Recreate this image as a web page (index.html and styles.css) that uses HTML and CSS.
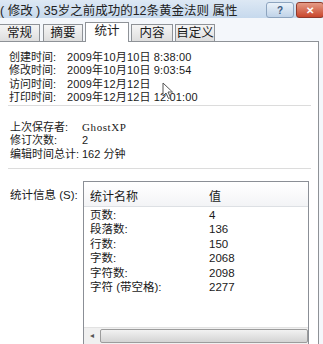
FILE: index.html
```html
<!DOCTYPE html>
<html lang="zh-CN">
<head>
  <meta charset="UTF-8" />
  <title>属性</title>
  <link rel="stylesheet" href="styles.css">
</head>
<body>
  <div class="window">
    <div class="titlebar">
      <span class="title">( 修改 ) 35岁之前成功的12条黄金法则 属性</span>
      <span class="tbtn help">?</span>
      <span class="tbtn close">✕</span>
    </div>

    <div class="tabs">
      <span class="tab t1">常规</span>
      <span class="tab t2">摘要</span>
      <span class="tab t3 active">统计</span>
      <span class="tab t4">内容</span>
      <span class="tab t5">自定义</span>
    </div>

    <div class="panel">
      <div class="group dates">
        <div class="row"><span class="lbl">创建时间:</span><span class="val">2009年10月10日 8:38:00</span></div>
        <div class="row"><span class="lbl">修改时间:</span><span class="val">2009年10月10日 9:03:54</span></div>
        <div class="row"><span class="lbl">访问时间:</span><span class="val">2009年12月12日</span></div>
        <div class="row"><span class="lbl">打印时间:</span><span class="val">2009年12月12日 12:01:00</span></div>
      </div>
      <div class="sep"></div>
      <div class="group meta">
        <div class="row"><span class="lbl">上次保存者:</span><span class="serif">GhostXP</span></div>
        <div class="row"><span class="lbl">修订次数:</span><span>2</span></div>
        <div class="row"><span class="lbl">编辑时间总计:</span><span>162 分钟</span></div>
      </div>
      <div class="sep"></div>

      <div class="stats">
        <span class="stats-lbl">统计信息 (S):</span>
        <div class="listbox">
          <div class="lb-head">
            <span class="c1">统计名称</span>
            <span class="c2">值</span>
          </div>
          <div class="lb-body">
            <div class="lb-row"><span class="c1">页数:</span><span class="c2">4</span></div>
            <div class="lb-row"><span class="c1">段落数:</span><span class="c2">136</span></div>
            <div class="lb-row"><span class="c1">行数:</span><span class="c2">150</span></div>
            <div class="lb-row"><span class="c1">字数:</span><span class="c2">2068</span></div>
            <div class="lb-row"><span class="c1">字符数:</span><span class="c2">2098</span></div>
            <div class="lb-row"><span class="c1">字符 (带空格):</span><span class="c2">2277</span></div>
          </div>
          <div class="hscroll">
            <span class="arrow">&#9666;</span>
            <span class="thumb"></span>
          </div>
        </div>
      </div>
    </div>

    <svg class="cursor" width="12" height="18" viewBox="0 0 12 18">
      <path d="M1 1 L1 14 L4 11 L6.5 16.5 L8.5 15.5 L6 10 L10.5 10 Z" fill="#fff" stroke="#555" stroke-width="1"/>
    </svg>
  </div>
</body>
</html>
```

FILE: styles.css
```css
body {
  margin: 0;
  width: 323px;
  height: 344px;
  overflow: hidden;
  background: #f4f7fb;
  font-family: "Liberation Sans", "Noto Sans CJK SC", sans-serif;
  font-size: 11px;
  color: #1a1a1a;
}
.window {
  position: relative;
  height: 344px;
}
.titlebar {
  height: 18px;
  display: flex;
  align-items: center;
  background: linear-gradient(#dde8f4, #c6d9ed);
}
.title {
  font-size: 12.5px;
  color: #222;
  flex: 1;
  white-space: nowrap;
}
.tbtn {
  width: 26px;
  height: 14px;
  margin-top: 2px;
  border: 1px solid #8da4bf;
  border-radius: 3px;
  display: flex;
  align-items: center;
  justify-content: center;
  font-size: 10px;
  font-weight: bold;
}
.help {
  background: linear-gradient(#eaf2fa, #c0d3e8);
  color: #3d5a80;
  margin-right: 2px;
}
.close {
  background: linear-gradient(#e49b86, #c9462c);
  border-color: #8f3a2c;
  color: #fff;
  margin-right: -1px;
}
.tabs {
  display: flex;
  align-items: flex-end;
  height: 23px;
  gap: 2px;
  position: relative;
  z-index: 1;
}
.tab {
  box-sizing: border-box;
  height: 17px;
  border: 1px solid #8e9297;
  border-bottom: none;
  background: linear-gradient(#f5f5f5, #dedede);
  font-size: 12.5px;
  line-height: 16px;
  text-align: center;
  white-space: nowrap;
}
.t1 { width: 40px; border-left: none; }
.t2 { width: 40px; margin-left: 1px; }
.t3 { width: 44px; }
.t4 { width: 42px; }
.t5 { width: 40px; }
.tab.active {
  height: 20px;
  line-height: 17px;
  background: #fff;
  margin-bottom: -1px;
}
.panel {
  width: 319px;
  height: 320px;
  background: #fff;
  border: 1px solid #8e9297;
  border-left: none;
  box-sizing: border-box;
  padding-top: 9px;
}
.group .row {
  display: flex;
  line-height: 13.3px;
  white-space: nowrap;
}
.dates { padding-left: 9px; }
.dates .lbl { width: 58px; }
.val { letter-spacing: 0.15px; }
.meta { padding-left: 10px; padding-top: 15px; }
.meta .lbl { width: 72px; }
.serif {
  font-family: "Liberation Serif", serif;
  letter-spacing: 0.6px;
}
.sep {
  height: 1px;
  background: #dcdcdc;
  margin: 1px 7px 0 8px;
}
.meta + .sep { margin-top: 7px; }
.stats {
  display: flex;
  padding-top: 12px;
  padding-left: 10px;
}
.stats-lbl {
  width: 73px;
  padding-top: 5px;
  font-size: 11.5px;
  white-space: nowrap;
}
.listbox {
  width: 226px;
  height: 164px;
  border: 1px solid #8b8f96;
  box-sizing: border-box;
  display: flex;
  flex-direction: column;
}
.lb-head {
  height: 22px;
  display: flex;
  align-items: center;
  background: linear-gradient(#ffffff, #f3f4f6);
  border-bottom: 1px solid #dde0e4;
  margin-top: 2px;
  font-size: 12px;
}
.c1 { width: 119px; padding-left: 6px; white-space: nowrap; }
.c2 { flex: 1; }
.lb-body {
  flex: 1;
  padding-top: 1px;
}
.lb-row {
  display: flex;
  line-height: 14.4px;
  font-size: 11.5px;
}
.hscroll {
  height: 16px;
  display: flex;
  border-top: 1px solid #e2e2e2;
  background: #f0f0f0;
}
.arrow {
  width: 16px;
  font-size: 8px;
  line-height: 16px;
  text-align: center;
  color: #555;
}
.thumb {
  flex: 1;
  margin: 1px 0;
  border: 1px solid #9c9c9c;
  border-radius: 2px;
  background: linear-gradient(#f2f2f2, #d4d4d4);
}
.cursor {
  position: absolute;
  left: 162px;
  top: 82px;
}
```
